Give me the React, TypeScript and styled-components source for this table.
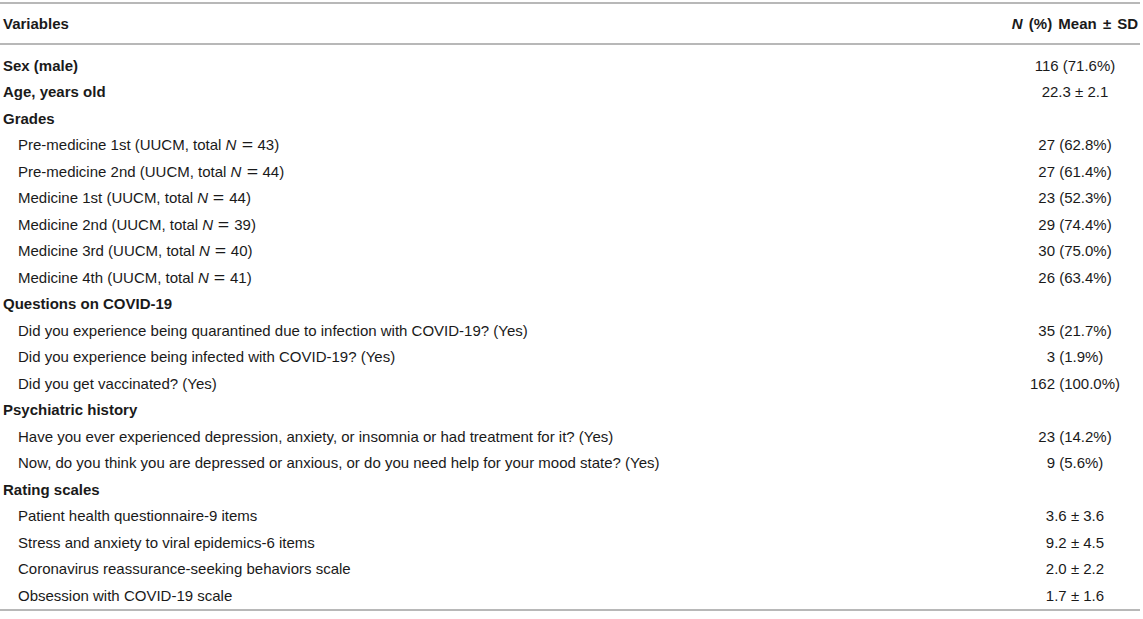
import React from "react";
import styled, { createGlobalStyle } from "styled-components";

const Global = createGlobalStyle`
  html, body { margin: 0; padding: 0; background: #ffffff; }
  body { font-family: "Liberation Sans", Arial, Helvetica, sans-serif; color: #1a1a1a; }
`;

const Table = styled.table`
  width: 1140px;
  margin-top: 2px;
  border-collapse: collapse;
  border-top: 2px solid #b8b8b8;
  border-bottom: 2px solid #b8b8b8;
  font-size: 15px;
`;

const HeadCell = styled.th`
  height: 38.5px;
  padding: 0 0 0 3px;
  text-align: left;
  vertical-align: middle;
  font-weight: 700;
  border-bottom: 2px solid #b8b8b8;
  white-space: nowrap;
`;

const ValueHead = styled(HeadCell)`
  width: 130px;
  padding: 0;
  text-align: center;
  word-spacing: 2px;
`;

const Row = styled.tr<{ $first?: boolean }>`
  & > td {
    line-height: 26.5px;
    padding-top: ${(p) => (p.$first ? "8px" : "0")};
  }
`;

const Label = styled.td<{ $bold?: boolean }>`
  padding: 0 0 0 ${(p) => (p.$bold ? "3px" : "18px")};
  font-weight: ${(p) => (p.$bold ? 700 : 400)};
  white-space: nowrap;
`;

const Value = styled.td`
  padding: 0;
  text-align: center;
  white-space: nowrap;
`;

const Ital = styled.i`
  font-style: italic;
`;

const Eq = styled.span`
  display: inline-block;
  margin: 0 2px;
  transform: scaleX(1.3);
`;

type Item = { label: React.ReactNode; value?: string; bold?: boolean };

const tot = (grade: string, n: number) => (
  <>
    {grade} (UUCM, total <Ital>N</Ital> <Eq>=</Eq> {n})
  </>
);

const items: Item[] = [
  { label: "Sex (male)", value: "116 (71.6%)", bold: true },
  { label: "Age, years old", value: "22.3 ± 2.1", bold: true },
  { label: "Grades", bold: true },
  { label: tot("Pre-medicine 1st", 43), value: "27 (62.8%)" },
  { label: tot("Pre-medicine 2nd", 44), value: "27 (61.4%)" },
  { label: tot("Medicine 1st", 44), value: "23 (52.3%)" },
  { label: tot("Medicine 2nd", 39), value: "29 (74.4%)" },
  { label: tot("Medicine 3rd", 40), value: "30 (75.0%)" },
  { label: tot("Medicine 4th", 41), value: "26 (63.4%)" },
  { label: "Questions on COVID-19", bold: true },
  { label: "Did you experience being quarantined due to infection with COVID-19? (Yes)", value: "35 (21.7%)" },
  { label: "Did you experience being infected with COVID-19? (Yes)", value: "3 (1.9%)" },
  { label: "Did you get vaccinated? (Yes)", value: "162 (100.0%)" },
  { label: "Psychiatric history", bold: true },
  { label: "Have you ever experienced depression, anxiety, or insomnia or had treatment for it? (Yes)", value: "23 (14.2%)" },
  { label: "Now, do you think you are depressed or anxious, or do you need help for your mood state? (Yes)", value: "9 (5.6%)" },
  { label: "Rating scales", bold: true },
  { label: "Patient health questionnaire-9 items", value: "3.6 ± 3.6" },
  { label: "Stress and anxiety to viral epidemics-6 items", value: "9.2 ± 4.5" },
  { label: "Coronavirus reassurance-seeking behaviors scale", value: "2.0 ± 2.2" },
  { label: "Obsession with COVID-19 scale", value: "1.7 ± 1.6" },
];

export default function App() {
  return (
    <>
      <Global />
      <Table>
        <thead>
          <tr>
            <HeadCell>Variables</HeadCell>
            <ValueHead>
              <Ital>N</Ital> (%) Mean ± SD
            </ValueHead>
          </tr>
        </thead>
        <tbody>
          {items.map((it, i) => (
            <Row key={i} $first={i === 0}>
              <Label $bold={it.bold}>{it.label}</Label>
              <Value>{it.value ?? ""}</Value>
            </Row>
          ))}
        </tbody>
      </Table>
    </>
  );
}
